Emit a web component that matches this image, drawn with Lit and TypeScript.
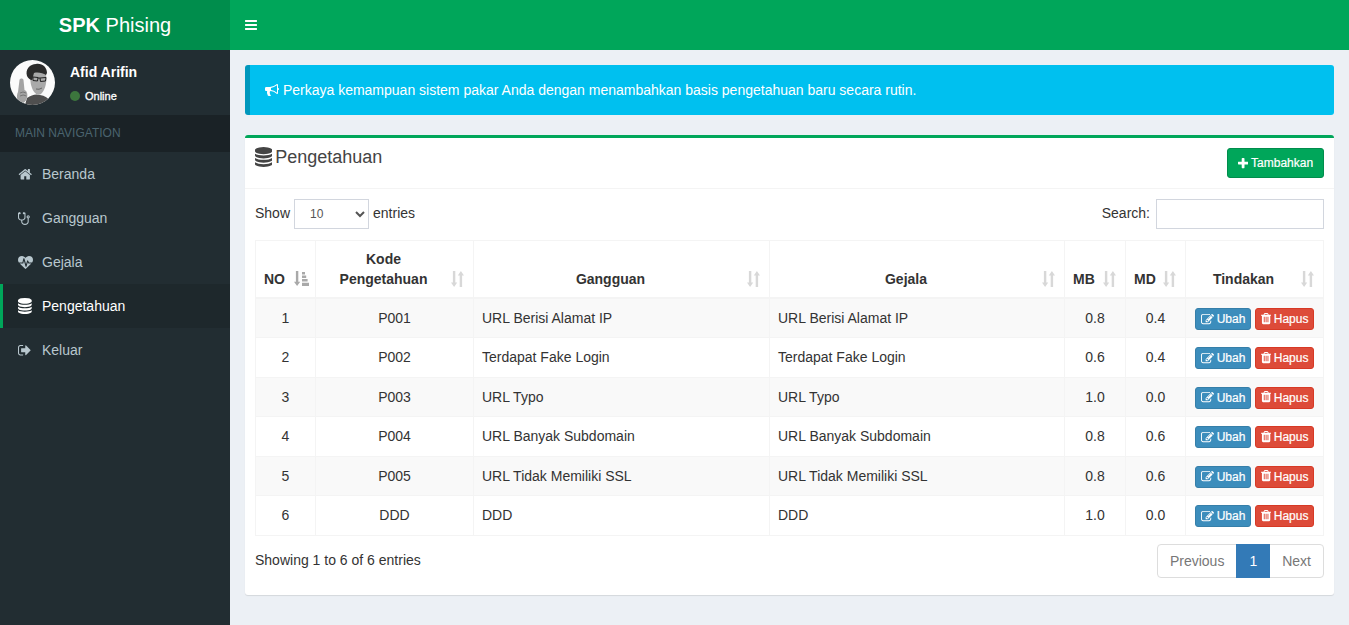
import { LitElement, css, html, svg } from 'lit';
import { customElement } from 'lit/decorators.js';

const FA = {
  home: [1792, 'M1472 992v480q0 26-19 45t-45 19h-384v-384h-256v384h-384q-26 0-45-19t-19-45v-480q0-1 .5-3t.5-3l575-474 575 474q1 2 1 6zm223-69l-62 74q-8 9-21 11h-3q-13 0-21-7l-692-577-692 577q-12 8-24 7-13-2-21-11l-62-74q-8-10-7-23.5t11-21.5l719-599q32-26 76-26t76 26l244 204v-195q0-14 9-23t23-9h192q14 0 23 9t9 23v408l219 182q10 8 11 21.5t-7 23.5z'],
  stethoscope: [1408, 'M1280 704q0-26-19-45t-45-19-45 19-19 45 19 45 45 19 45-19 19-45zm128 0q0 62-35.5 111t-92.5 70v395q0 159-131.5 271.5t-316.5 112.5-316.5-112.5-131.5-271.5v-132q-164-20-274-128t-110-252v-512q0-26 19-45t45-19q6 0 16 2 17-30 47-48t65-18q53 0 90.5 37.5t37.5 90.5-37.5 90.5-90.5 37.5q-33 0-64-18v402q0 106 94 181t226 75 226-75 94-181v-402q-31 18-64 18-53 0-90.5-37.5t-37.5-90.5 37.5-90.5 90.5-37.5q35 0 65 18t47 48q10-2 16-2 26 0 45 19t19 45v512q0 144-110 252t-274 128v132q0 106 94 181t226 75 226-75 94-181v-395q-57-21-92.5-70t-35.5-111q0-80 56-136t136-56 136 56 56 136z'],
  heartbeat: [1792, 'M1280 1024h305q-5 6-10 10.5t-9 7.5l-3 4-623 600q-18 18-44 18t-44-18l-624-602q-5-2-21-20h369q22 0 39.5-13.5t22.5-34.5l70-281 190 667q6 20 23 33t39 13q21 0 38-13t23-33l146-485 56 112q18 35 57 35zm512-428q0 145-103 300h-369l-111-221q-8-17-25.5-27t-36.5-8q-45 5-56 46l-129 430-196-686q-6-20-23.5-33t-39.5-13-39 13.5-22 34.5l-116 464h-423q-103-155-103-300 0-220 127-344t351-124q62 0 126.5 21.5t120 58 95.5 68.5 76 68q36-36 76-68t95.5-68.5 120-58 126.5-21.5q224 0 351 124t127 344z'],
  database: [1536, 'M768 768q237 0 443-43t325-127v170q0 69-103 128t-280 93.5-385 34.5-385-34.5-280-93.5-103-128v-170q119 84 325 127t443 43zm0 768q237 0 443-43t325-127v170q0 69-103 128t-280 93.5-385 34.5-385-34.5-280-93.5-103-128v-170q119 84 325 127t443 43zm0-384q237 0 443-43t325-127v170q0 69-103 128t-280 93.5-385 34.5-385-34.5-280-93.5-103-128v-170q119 84 325 127t443 43zm0-1152q208 0 385 34.5t280 93.5 103 128v128q0 69-103 128t-280 93.5-385 34.5-385-34.5-280-93.5-103-128v-128q0-69 103-128t280-93.5 385-34.5z'],
  signOut: [1664, 'M640 1440q0 4 1 20t.5 26.5-3 23.5-10 19.5-20.5 6.5h-320q-119 0-203.5-84.5t-84.5-203.5v-704q0-119 84.5-203.5t203.5-84.5h320q13 0 22.5 9.5t9.5 22.5q0 4 1 20t.5 26.5-3 23.5-10 19.5-20.5 6.5h-320q-66 0-113 47t-47 113v704q0 66 47 113t113 47h312l11.5 1 11.5 3 8 5.5 7 9 2 13.5zm928-544q0 26-19 45l-544 544q-19 19-45 19t-45-19-19-45v-288h-448q-26 0-45-19t-19-45v-384q0-26 19-45t45-19h448v-288q0-26 19-45t45-19 45 19l544 544q19 19 19 45z'],
  bars: [1536, 'M1536 1344v128q0 26-19 45t-45 19h-1408q-26 0-45-19t-19-45v-128q0-26 19-45t45-19h1408q26 0 45 19t19 45zm0-512v128q0 26-19 45t-45 19h-1408q-26 0-45-19t-19-45v-128q0-26 19-45t45-19h1408q26 0 45 19t19 45zm0-512v128q0 26-19 45t-45 19h-1408q-26 0-45-19t-19-45v-128q0-26 19-45t45-19h1408q26 0 45 19t19 45z'],
  bullhorn: [1792, 'M1664 640q53 0 90.5 37.5t37.5 90.5-37.5 90.5-90.5 37.5v384q0 52-38 90t-90 38q-417-347-812-380-58 19-91 66t-31 100.5 40 92.5q-20 33-23 65.5t6 58 33.5 55 48 50 61.5 50.5q-29 58-111.5 83t-168.5 11.5-132-55.5q-7-23-29.5-87.5t-32-94.5-23-89-15-101 3.5-98.5 22-110.5h-122q-66 0-113-47t-47-113v-192q0-66 47-113t113-47h480q435 0 896-384 52 0 90 38t38 90v384zm-128 604v-954q-394 302-768 343v270q377 42 768 341z'],
  plus: [1408, 'M1408 736v192q0 40-28 68t-68 28h-416v416q0 40-28 68t-68 28h-192q-40 0-68-28t-28-68v-416h-416q-40 0-68-28t-28-68v-192q0-40 28-68t68-28h416v-416q0-40 28-68t68-28h192q40 0 68 28t28 68v416h416q40 0 68 28t28 68z'],
  edit: [1792, 'M888 1184l116-116-152-152-116 116v56h96v96h56zm440-720q-16-16-33 1l-350 350q-17 17-1 33t33-1l350-350q17-17 1-33zm80 594v190q0 119-84.5 203.5t-203.5 84.5h-832q-119 0-203.5-84.5t-84.5-203.5v-832q0-119 84.5-203.5t203.5-84.5h832q63 0 117 25 15 7 18 23 3 17-9 29l-49 49q-14 14-32 8-23-6-45-6h-832q-66 0-113 47t-47 113v832q0 66 47 113t113 47h832q66 0 113-47t47-113v-126q0-13 9-22l64-64q15-15 35-7t20 29zm-96-738l288 288-672 672h-288v-288zm444 132l-92 92-288-288 92-92q28-28 68-28t68 28l152 152q28 28 28 68t-28 68z'],
  trash: [1408, 'M512 1248v-704q0-14-9-23t-23-9h-64q-14 0-23 9t-9 23v704q0 14 9 23t23 9h64q14 0 23-9t9-23zm256 0v-704q0-14-9-23t-23-9h-64q-14 0-23 9t-9 23v704q0 14 9 23t23 9h64q14 0 23-9t9-23zm256 0v-704q0-14-9-23t-23-9h-64q-14 0-23 9t-9 23v704q0 14 9 23t23 9h64q14 0 23-9t9-23zm-544-992h448l-48-117q-7-9-17-11h-317q-10 2-17 11zm928 32v64q0 14-9 23t-23 9h-96v948q0 83-47 143.5t-113 60.5h-832q-66 0-113-58.5t-47-141.5v-952h-96q-14 0-23-9t-9-23v-64q0-14 9-23t23-9h309l70-167q15-37 54-63t79-26h320q40 0 79 26t54 63l70 167h309q14 0 23 9t9 23z'],
} as const;

type IconName = keyof typeof FA;

// font awesome 4 glyphs, 1792 units tall
const icon = (name: IconName, size = 14) => {
  const [w, d] = FA[name];
  return html`<svg class="fa" style="height:${size}px;width:${(size * w) / 1792}px" viewBox="0 0 ${w} 1792" fill="currentColor"><path d=${d}></path></svg>`;
};

const sortIcon = () => html`
  <svg class="sort" width="13" height="16" viewBox="0 0 13 16" fill="currentColor">
    ${svg`<path d="M1.9 0h2.4v11.600h1.900L3.100 16 0 11.600h1.900z"></path>`}
    ${svg`<path d="M8.700 16h2.400V4.400H13L9.900 0 6.800 4.400h1.900z"></path>`}
  </svg>`;

const sortIconOn = () => html`
  <svg class="sort on" width="15" height="15" viewBox="0 0 15 15" fill="currentColor">
    ${svg`<path d="M1.900 0h2.400v10.800h1.900L3.100 15 0 10.800h1.900z"></path>`}
    ${svg`<path d="M8 1h3v2.500H8zM8 4.500h4.200V7H8zM8 8h5.600v2.600H8zM8 11.700h7V15H8z"></path>`}
  </svg>`;

const rows = [
  ['1', 'P001', 'URL Berisi Alamat IP', 'URL Berisi Alamat IP', '0.8', '0.4'],
  ['2', 'P002', 'Terdapat Fake Login', 'Terdapat Fake Login', '0.6', '0.4'],
  ['3', 'P003', 'URL Typo', 'URL Typo', '1.0', '0.0'],
  ['4', 'P004', 'URL Banyak Subdomain', 'URL Banyak Subdomain', '0.8', '0.6'],
  ['5', 'P005', 'URL Tidak Memiliki SSL', 'URL Tidak Memiliki SSL', '0.8', '0.6'],
  ['6', 'DDD', 'DDD', 'DDD', '1.0', '0.0'],
];

const menu: { label: string; icon: IconName; size: number; active?: boolean }[] = [
  { label: 'Beranda', icon: 'home', size: 14.5 },
  { label: 'Gangguan', icon: 'stethoscope', size: 15 },
  { label: 'Gejala', icon: 'heartbeat', size: 15 },
  { label: 'Pengetahuan', icon: 'database', size: 16, active: true },
  { label: 'Keluar', icon: 'signOut', size: 14.5 },
];

const avatar = html`
  <svg class="avatar" viewBox="0 0 45 45">
    <clipPath id="av"><circle cx="22.5" cy="22.5" r="22.5"></circle></clipPath>
    <circle cx="22.500" cy="22.500" r="22.500" fill="#fbfbfb"></circle>
    <g clip-path="url(#av)">
      <path d="M15 45l2-7q7-5 13-3 7 1 11 7v3z" fill="#4f4f4f"></path>
      <path d="M21 13c4-2 11-2 15 1 1 7 0 15-5 20-4 2-7-1-9-6-2-5-2-10-1-15z" fill="#a9a9a9"></path>
      <path d="M17 16C15 9 20 4 26 4c6-1 11 3 11 9l-1 2c-3-2-8-3-12-2-1 3-1 5-2 7-2 0-4-2-5-4z" fill="#2b2b2b"></path>
      <g fill="none" stroke="#222" stroke-width="1">
        <path d="M23 17l5 .5-.5 3.500-4.500-.5zM30 18l6-.5-.5 3.500-5 .5zM28 18h2"></path>
      </g>
      <path d="M26 29q3 1 6-1" fill="none" stroke="#666" stroke-width="1"></path>
      <path d="M9.500 20c.5-2 3.500-2 4 0l1 10c2.500 1 3.500 4 2.500 8-1 4-4 6-7 5-3-2-4-7-2-11z" fill="#a3a3a3"></path>
      <path d="M10 33q3-2 6 0M10 36q3-2 6.500 0" fill="none" stroke="#6a6a6a" stroke-width=".8"></path>
    </g>
  </svg>`;

@customElement('app-root')
export class AppRoot extends LitElement {
  static styles = css`
    :host {
      display: block;
      min-height: 625px;
      background: #ecf0f5;
      font-family: 'Liberation Sans', Arial, sans-serif;
      font-size: 14px;
      line-height: 20px;
      color: #333;
    }
    * { box-sizing: border-box; }
    .fa { display: inline-block; vertical-align: -2px; flex: none; }
    .wrap { display: flex; min-height: 625px; }

    .sidebar { width: 230px; flex: none; background: #222d32; }
    .logo {
      height: 50px;
      background: #008d4c;
      color: #fff;
      font-size: 20px;
      line-height: 50px;
      text-align: center;
    }
    .logo b { font-weight: 700; }
    .user { height: 65px; padding: 10px; display: flex; }
    .avatar { width: 45px; height: 45px; flex: none; }
    .user-info { padding: 5px 0 0 15px; color: #fff; }
    .user-name { line-height: 14px; font-size: 14px; font-weight: 700; }
    .user-status {
      font-size: 11px;
      line-height: 14px;
      margin-top: 10px;
      display: flex;
      align-items: center;
      -webkit-text-stroke: 0.3px #fff;
    }
    .dot { width: 10px; height: 10px; border-radius: 50%; background: #3c763d; margin-right: 5px; }
    .nav-head {
      height: 37px;
      background: #1a2226;
      color: #4b646f;
      font-size: 12px;
      line-height: 37px;
      padding-left: 15px;
    }
    .item {
      height: 44px;
      display: flex;
      align-items: center;
      color: #b8c7ce;
      border-left: 3px solid transparent;
      padding-left: 15px;
    }
    .item.active { background: #1e282c; color: #fff; border-left-color: #00a65a; }
    .item-icon { width: 24px; display: flex; align-items: center; }

    .main { flex: 1; min-width: 0; display: flex; flex-direction: column; }
    .topbar { height: 50px; background: #00a65a; color: #fff; display: flex; align-items: center; padding-left: 15px; }
    .content { padding: 15px; }

    .alert {
      height: 50px;
      background: #00c0ef;
      border-left: 5px solid #0097bc;
      border-radius: 3px;
      color: #fff;
      padding: 15px;
      margin-bottom: 20px;
    }

    .box {
      background: #fff;
      border-top: 3px solid #00a65a;
      border-radius: 3px;
      box-shadow: 0 1px 1px rgba(0, 0, 0, 0.1);
      height: 460px;
    }
    .box-head {
      height: 51px;
      border-bottom: 1px solid #f4f4f4;
      padding: 10px;
      display: flex;
      justify-content: space-between;
    }
    .box-title { display: flex; gap: 3px; font-size: 18px; line-height: 18px; color: #444; }
    .box-title .fa { margin-top: -1px; }
    .btn {
      display: inline-flex;
      align-items: center;
      justify-content: center;
      gap: 3px;
      color: #fff;
      border: 1px solid;
      border-radius: 3px;
      font-size: 12px;
      white-space: nowrap;
      -webkit-text-stroke: 0.2px #fff;
    }
    .add { height: 30px; width: 97px; background: #00a65a; border-color: #008d4c; }
    .box-body { padding: 10px; }
    .tools { display: flex; justify-content: space-between; height: 30px; }
    .tools label { display: flex; align-items: flex-start; line-height: 28px; }
    .len {
      width: 75px;
      height: 30px;
      margin: 0 4px;
      padding: 0 0 0 11px;
      border: 1px solid #d2d6de;
      background: #fff;
      font: 12px 'Liberation Sans', Arial, sans-serif;
      color: #555;
      border-radius: 0;
    }
    .search { width: 168px; height: 30px; margin-left: 6px; border: 1px solid #d2d6de; background: #fff; }

    table {
      border-collapse: collapse;
      table-layout: fixed;
      width: 1068px;
      margin-top: 11px;
    }
    th, td { border: 1px solid #f4f4f4; padding: 8px; }
    th {
      position: relative;
      font-weight: 700;
      text-align: center;
      vertical-align: bottom;
      border-bottom-width: 2px;
      padding-right: 30px;
      height: 57px;
    }
    td { text-align: center; padding: 0 8px; height: 39.5px; }
    td.t { text-align: left; }
    tbody tr:nth-child(odd) { background: #f9f9f9; }
    .sort { position: absolute; right: 9px; bottom: 10px; color: #d8d8d8; }
    .sort.on { color: #a9a9a9; right: 6px; bottom: 11px; }
    .acts { display: flex; justify-content: center; gap: 4px; padding-top: 2px; }
    .xs { height: 22px; padding: 0 5px; }
    .ubah { width: 56px; background: #3c8dbc; border-color: #367fa9; }
    .hapus { width: 59px; background: #dd4b39; border-color: #d73925; }

    .foot { display: flex; justify-content: space-between; margin-top: 8px; }
    .info { padding-top: 6px; }
    .pages { display: flex; height: 34px; }
    .pages span { padding: 6px 12px; border: 1px solid #ddd; color: #777; background: #fff; }
    .pages span + span { margin-left: -1px; }
    .pages span:first-child { border-radius: 4px 0 0 4px; }
    .pages span:last-child { border-radius: 0 4px 4px 0; }
    .pages .cur { background: #337ab7; border-color: #337ab7; color: #fff; position: relative; }
  `;

  render() {
    return html`
      <div class="wrap">
        <aside class="sidebar">
          <div class="logo"><b>SPK</b> Phising</div>
          <div class="user">
            ${avatar}
            <div class="user-info">
              <div class="user-name">Afid Arifin</div>
              <div class="user-status"><span class="dot"></span>Online</div>
            </div>
          </div>
          <div class="nav-head">MAIN NAVIGATION</div>
          ${menu.map(
            (m) => html`
              <div class="item ${m.active ? 'active' : ''}">
                <span class="item-icon">${icon(m.icon, m.size)}</span>${m.label}
              </div>
            `,
          )}
        </aside>
        <div class="main">
          <div class="topbar">${icon('bars')}</div>
          <div class="content">
            <div class="alert">
              ${icon('bullhorn')} Perkaya kemampuan sistem pakar Anda dengan menambahkan basis pengetahuan baru secara rutin.
            </div>
            <div class="box">
              <div class="box-head">
                <div class="box-title">${icon('database', 20)}<span>Pengetahuan</span></div>
                <span class="btn add">${icon('plus', 13)} Tambahkan</span>
              </div>
              <div class="box-body">
                <div class="tools">
                  <label>Show
                    <select class="len"><option>10</option><option>25</option><option>50</option></select>
                    entries</label>
                  <label>Search:<input class="search" /></label>
                </div>
                <table>
                  <colgroup>
                    <col style="width:60px" /><col style="width:158px" /><col style="width:296px" />
                    <col style="width:295px" /><col style="width:61px" /><col style="width:60px" /><col style="width:138px" />
                  </colgroup>
                  <thead>
                    <tr>
                      <th>NO${sortIconOn()}</th>
                      <th>Kode Pengetahuan${sortIcon()}</th>
                      <th>Gangguan${sortIcon()}</th>
                      <th>Gejala${sortIcon()}</th>
                      <th>MB${sortIcon()}</th>
                      <th>MD${sortIcon()}</th>
                      <th>Tindakan${sortIcon()}</th>
                    </tr>
                  </thead>
                  <tbody>
                    ${rows.map(
                      (r) => html`
                        <tr>
                          <td>${r[0]}</td>
                          <td>${r[1]}</td>
                          <td class="t">${r[2]}</td>
                          <td class="t">${r[3]}</td>
                          <td>${r[4]}</td>
                          <td>${r[5]}</td>
                          <td>
                            <div class="acts">
                              <span class="btn xs ubah">${icon('edit', 13)} Ubah</span>
                              <span class="btn xs hapus">${icon('trash', 13)} Hapus</span>
                            </div>
                          </td>
                        </tr>
                      `,
                    )}
                  </tbody>
                </table>
                <div class="foot">
                  <div class="info">Showing 1 to 6 of 6 entries</div>
                  <div class="pages"><span>Previous</span><span class="cur">1</span><span>Next</span></div>
                </div>
              </div>
            </div>
          </div>
        </div>
      </div>
    `;
  }
}
